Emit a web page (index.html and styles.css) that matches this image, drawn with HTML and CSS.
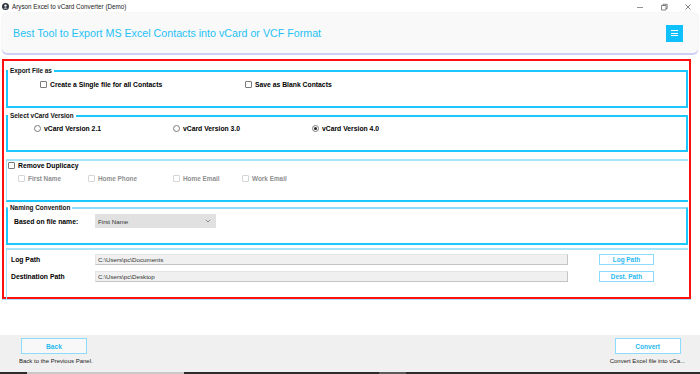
FILE: index.html
```html
<!DOCTYPE html>
<html lang="en">
<head>
    <meta charset="UTF-8">
    <title>Aryson Excel to vCard Converter (Demo)</title>
    <link rel="stylesheet" href="styles.css">
</head>
<body>
    <div class="titlebar">
        <svg class="app-icon" width="7" height="7" viewBox="0 0 7 7">
            <circle cx="3.5" cy="3.5" r="3.5" fill="#2d3440"/>
            <circle cx="3.5" cy="2.6" r="1.2" fill="#fff"/>
            <path d="M1.4 5.6 Q3.5 3.2 5.6 5.6" fill="#fff"/>
        </svg>
        <span class="app-name">Aryson Excel to vCard Converter (Demo)</span>
        <div class="win-ctrls">
            <svg width="8" height="8" viewBox="0 0 8 8"><path d="M1 4.5h6" stroke="#777" stroke-width="0.8"/></svg>
            <svg width="8" height="8" viewBox="0 0 8 8"><path d="M1.5 2.5h4.5v4.5h-4.5z M3 2.5v-1.2h4.2v4.2h-1.2" fill="none" stroke="#666" stroke-width="0.8"/></svg>
            <svg width="8" height="8" viewBox="0 0 8 8"><path d="M1.5 1.5l5 5M6.5 1.5l-5 5" stroke="#666" stroke-width="0.8"/></svg>
        </div>
    </div>

    <header class="hero">
        <h1>Best Tool to Export MS Excel Contacts into vCard or VCF Format</h1>
        <button class="menu-btn"><span></span><span></span><span></span></button>
    </header>

    <main class="panel">
        <fieldset class="group g-export">
            <legend>Export File as</legend>
            <div class="row">
                <label class="opt w-export"><span class="chk"></span>Create a Single file for all Contacts</label>
                <label class="opt"><span class="chk"></span>Save as Blank Contacts</label>
            </div>
        </fieldset>

        <fieldset class="group g-version">
            <legend>Select vCard Version</legend>
            <div class="row">
                <label class="opt w-radio"><span class="radio"></span>vCard Version 2.1</label>
                <label class="opt w-radio"><span class="radio"></span>vCard Version 3.0</label>
                <label class="opt"><span class="radio on"></span>vCard Version 4.0</label>
            </div>
        </fieldset>

        <div class="box g-dup">
            <label class="opt"><span class="chk"></span>Remove Duplicacy</label>
            <div class="row sub">
                <label class="opt off w-first"><span class="chk"></span>First Name</label>
                <label class="opt off w-phone"><span class="chk"></span>Home Phone</label>
                <label class="opt off w-home"><span class="chk"></span>Home Email</label>
                <label class="opt off"><span class="chk"></span>Work Email</label>
            </div>
        </div>

        <fieldset class="group g-naming">
            <legend>Naming Convention</legend>
            <div class="row">
                <span class="field-label w-based">Based on file name:</span>
                <div class="select">First Name
                    <svg width="6" height="4" viewBox="0 0 6 4"><path d="M0.8 0.8l2.2 2.2 2.2-2.2" fill="none" stroke="#666" stroke-width="0.7"/></svg>
                </div>
            </div>
        </fieldset>

        <div class="box g-paths">
            <div class="path-row">
                <span class="field-label w-path">Log Path</span>
                <div class="path-input">C:\Users\pc\Documents</div>
                <button class="small-btn">Log Path</button>
            </div>
            <div class="path-row">
                <span class="field-label w-path">Destination Path</span>
                <div class="path-input">C:\Users\pc\Desktop</div>
                <button class="small-btn">Dest. Path</button>
            </div>
        </div>
    </main>

    <footer class="footer">
        <div class="nav nav-back">
            <button class="nav-btn">Back</button>
            <p>Back to the Previous Panel.</p>
        </div>
        <div class="nav nav-next">
            <button class="nav-btn">Convert</button>
            <p>Convert Excel file into vCa...</p>
        </div>
    </footer>

    <div class="taskbar">
        <span class="tb-a"></span>
        <span class="tb-b"></span>
    </div>
</body>
</html>
```

FILE: styles.css
```css
* {
    box-sizing: border-box;
}
body {
    margin: 0;
    width: 700px;
    height: 374px;
    overflow: hidden;
    background: #fff;
    font-family: "Liberation Sans", Arial, sans-serif;
    color: #000;
}

/* window title bar */
.titlebar {
    height: 13px;
    display: flex;
    align-items: center;
    padding-left: 2px;
}
.app-icon {
    margin-right: 3px;
}
.app-name {
    font-size: 6.3px;
    color: #222;
}
.win-ctrls {
    margin-left: auto;
    display: flex;
    gap: 16px;
    padding-right: 8px;
}

/* blue title card */
.hero {
    height: 40px;
    margin: 0 2px;
    padding: 0 15px 0 11px;
    display: flex;
    align-items: center;
    justify-content: space-between;
    background: #f9f9f9;
    border-radius: 5px;
    box-shadow: 0 2px 0 #cfcff6, 0 0 2px rgba(0, 0, 0, 0.12);
}
.hero h1 {
    margin: 0;
    font-size: 10.7px;
    font-weight: normal;
    color: #1fc1f5;
}
.menu-btn {
    width: 17px;
    height: 17px;
    padding: 0;
    border: none;
    background: #0fc0ff;
    display: flex;
    flex-direction: column;
    align-items: center;
    justify-content: center;
    gap: 1.5px;
}
.menu-btn span {
    display: block;
    width: 7px;
    height: 1px;
    background: #fff;
}

/* main red panel */
.panel {
    margin: 6px 0 0 2px;
    width: 689px;
    height: 240px;
    border: 2px solid #ff1010;
    padding: 0 1px 0 2px;
    box-shadow: 0 1px 0 #a9e5fa;
}
.group {
    margin: 0;
    padding: 0;
    min-width: 0;
    border: 2px solid #1cc6ff;
}
.group legend {
    padding: 0 2px;
    font-size: 6.4px;
    line-height: 8px;
    font-weight: bold;
    color: #111;
}
.g-export {
    margin-top: 6px;
    height: 41px;
}
.g-export .row {
    margin: 5px 0 0 32px;
}
.g-version {
    margin-top: 4px;
    height: 40px;
}
.g-version .row {
    margin: 4px 0 0 26px;
}
.box {
    border-top: 2px solid #a6e4fb;
    border-left: 1px solid #a6e4fb;
}
.g-dup {
    margin-top: 7px;
    height: 43px;
    padding-left: 1px;
    border-bottom: 2px solid #1cc6ff;
}
.g-dup .sub {
    margin: 4px 0 0 10px;
}
.g-naming {
    margin-top: 2px;
    height: 41px;
    border-top-color: #8fdcfa;
}
.g-naming .row {
    margin: 2px 0 0 6px;
}
.g-paths {
    margin-top: 3px;
    height: 51px;
    padding: 3px 0 0 4px;
}

.row {
    display: flex;
    align-items: center;
}
.opt {
    display: flex;
    align-items: center;
    height: 9px;
    font-size: 6.8px;
    font-weight: bold;
    white-space: nowrap;
}
.opt.off {
    color: #8f8f8f;
    font-size: 6.4px;
}
.w-export { width: 205px; }
.w-radio { width: 139px; }
.w-first { width: 70px; }
.w-phone { width: 85px; }
.w-home { width: 69px; }

.chk {
    width: 7px;
    height: 7px;
    margin-right: 3px;
    border: 1px solid #7a7a7a;
    border-radius: 1px;
    background: #fff;
}
.off .chk {
    border-color: #d6d6d6;
    margin-right: 3px;
}
.radio {
    width: 7px;
    height: 7px;
    margin-right: 3px;
    border: 1px solid #7a7a7a;
    border-radius: 50%;
    background: #fff;
    display: flex;
    align-items: center;
    justify-content: center;
}
.radio.on::after {
    content: "";
    width: 3px;
    height: 3px;
    border-radius: 50%;
    background: #222;
}

.field-label {
    font-size: 6.8px;
    font-weight: bold;
    white-space: nowrap;
}
.w-based { width: 81px; }
.w-path { width: 84px; }

.select {
    width: 121px;
    height: 14px;
    padding: 0 5px 0 3px;
    display: flex;
    align-items: center;
    justify-content: space-between;
    background: #e1e1e1;
    font-size: 6.2px;
    color: #333;
}

.path-row {
    display: flex;
    align-items: center;
    height: 12px;
    margin-bottom: 5px;
}
.path-input {
    width: 473px;
    height: 11px;
    padding-left: 2px;
    display: flex;
    align-items: center;
    background: #f0f0f0;
    border: 1px solid #e4e4e4;
    border-right-color: #c4c4c4;
    border-bottom-color: #c4c4c4;
    font-size: 6.2px;
    color: #333;
}
.small-btn {
    margin-left: 31px;
    width: 55px;
    height: 11px;
    padding: 0;
    background: #fff;
    border: 1.5px solid #8bdcff;
    font-family: inherit;
    font-size: 6.4px;
    font-weight: bold;
    color: #2ab9f2;
}

/* bottom navigation */
.footer {
    margin-top: 36px;
    height: 37px;
    padding: 3px 15px 0 19px;
    display: flex;
    justify-content: space-between;
    background: #f0f0f0;
}
.nav p {
    margin: 3px 0 0;
    font-size: 6px;
    line-height: 8px;
    color: #222;
    white-space: nowrap;
}
.nav-btn {
    display: block;
    width: 66px;
    height: 16px;
    padding: 0;
    background: #fff;
    border: 1.5px solid #8bdcff;
    font-family: inherit;
    font-size: 6.6px;
    font-weight: bold;
    color: #2ab9f2;
}
.nav-back .nav-btn {
    margin-left: 2px;
    background: #f8f8f8;
}
.nav-next .nav-btn {
    margin-left: 5px;
}

.taskbar {
    height: 2px;
    background: #2c2c2c;
    display: flex;
}
.tb-a {
    margin-left: 27px;
    width: 157px;
    background: #c9c9c9;
}
.tb-b {
    margin-left: 195px;
    width: 27px;
    background: #5a5a5a;
}
```
